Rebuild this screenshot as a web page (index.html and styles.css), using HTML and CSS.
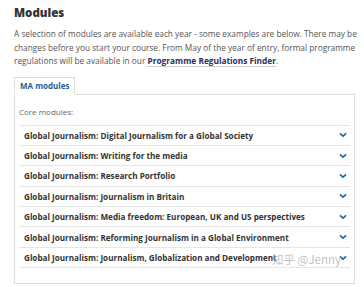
FILE: index.html
```html
<!DOCTYPE html>
<html>
<head>
<meta charset="utf-8">
<link rel="stylesheet" href="styles.css">
</head>
<body>
<div class="page">
  <h2 class="title">Modules</h2>
  <p class="intro">A selection of modules are available each year - some examples are below. There may be changes before you start your course. From May of the year of entry, formal programme regulations will be available in our <a class="link" href="#">Programme Regulations Finder</a>.</p>
  <div class="tabs">
    <div class="tab">MA modules</div>
  </div>
  <div class="panel">
    <div class="label">Core modules:</div>
    <div class="list">
      <div class="row"><span>Global Journalism: Digital Journalism for a Global Society</span><svg class="chev" viewBox="0 0 10 7"><path d="M1.2 1.5 L5 5 L8.8 1.5" /></svg></div>
      <div class="row"><span>Global Journalism: Writing for the media</span><svg class="chev" viewBox="0 0 10 7"><path d="M1.2 1.5 L5 5 L8.8 1.5" /></svg></div>
      <div class="row"><span>Global Journalism: Research Portfolio</span><svg class="chev" viewBox="0 0 10 7"><path d="M1.2 1.5 L5 5 L8.8 1.5" /></svg></div>
      <div class="row"><span>Global Journalism: Journalism in Britain</span><svg class="chev" viewBox="0 0 10 7"><path d="M1.2 1.5 L5 5 L8.8 1.5" /></svg></div>
      <div class="row"><span>Global Journalism: Media freedom: European, UK and US perspectives</span><svg class="chev" viewBox="0 0 10 7"><path d="M1.2 1.5 L5 5 L8.8 1.5" /></svg></div>
      <div class="row"><span>Global Journalism: Reforming Journalism in a Global Environment</span><svg class="chev" viewBox="0 0 10 7"><path d="M1.2 1.5 L5 5 L8.8 1.5" /></svg></div>
      <div class="row"><span>Global Journalism: Journalism, Globalization and Development</span><svg class="chev" viewBox="0 0 10 7"><path d="M1.2 1.5 L5 5 L8.8 1.5" /></svg></div>
    </div>
  </div>
  <div class="watermark">知乎 @Jenny</div>
</div>
</body>
</html>
```
FILE: styles.css
```css
* { box-sizing: border-box; }
body {
  margin: 0;
  background: #fff;
  font-family: "Open Sans", "Noto Sans CJK SC", sans-serif;
  color: #555;
}
.page {
  position: relative;
  padding: 4px 9px 0 14px;
}
.title {
  margin: 0;
  font-size: 11.5px;
  font-weight: 800;
  color: #333;
  line-height: 18px;
}
.intro {
  margin: 5px -4px 0 0;
  font-size: 8.3px;
  line-height: 13.5px;
  color: #555;
}
.link {
  color: #2b2e5c;
  font-weight: 700;
  text-decoration: none;
  border-bottom: 1px solid #ccc;
}
.tabs {
  display: flex;
  margin-top: 9px;
}
.tab {
  border: 1px solid #ddd;
  border-bottom: 1px solid #fff;
  padding: 3px 5px 3px 5px;
  font-size: 8px;
  line-height: 10px;
  font-weight: 700;
  color: #1f5e96;
  margin-bottom: -1px;
  background: #fff;
  position: relative;
}
.panel {
  border: 1px solid #ddd;
  padding: 12px 4px 15px 4px;
}
.label {
  font-size: 8px;
  color: #666;
  line-height: 10px;
  margin-bottom: 8px;
}
.list {
  border-top: 1px solid #e6e6e6;
}
.row {
  display: flex;
  align-items: center;
  justify-content: space-between;
  height: 20.4px;
  padding: 0 3px 0 5px;
  border-bottom: 1px solid #e6e6e6;
  font-size: 8.15px;
  font-weight: 700;
  color: #333;
}
.chev {
  width: 8px;
  height: 6px;
  fill: none;
  stroke: #1f64a8;
  stroke-width: 2;
}
.watermark {
  position: absolute;
  right: 23px;
  top: 251px;
  font-size: 11.5px;
  color: rgba(175,175,175,0.8);
  font-family: "Noto Sans CJK SC", "Open Sans", sans-serif;
}
```
